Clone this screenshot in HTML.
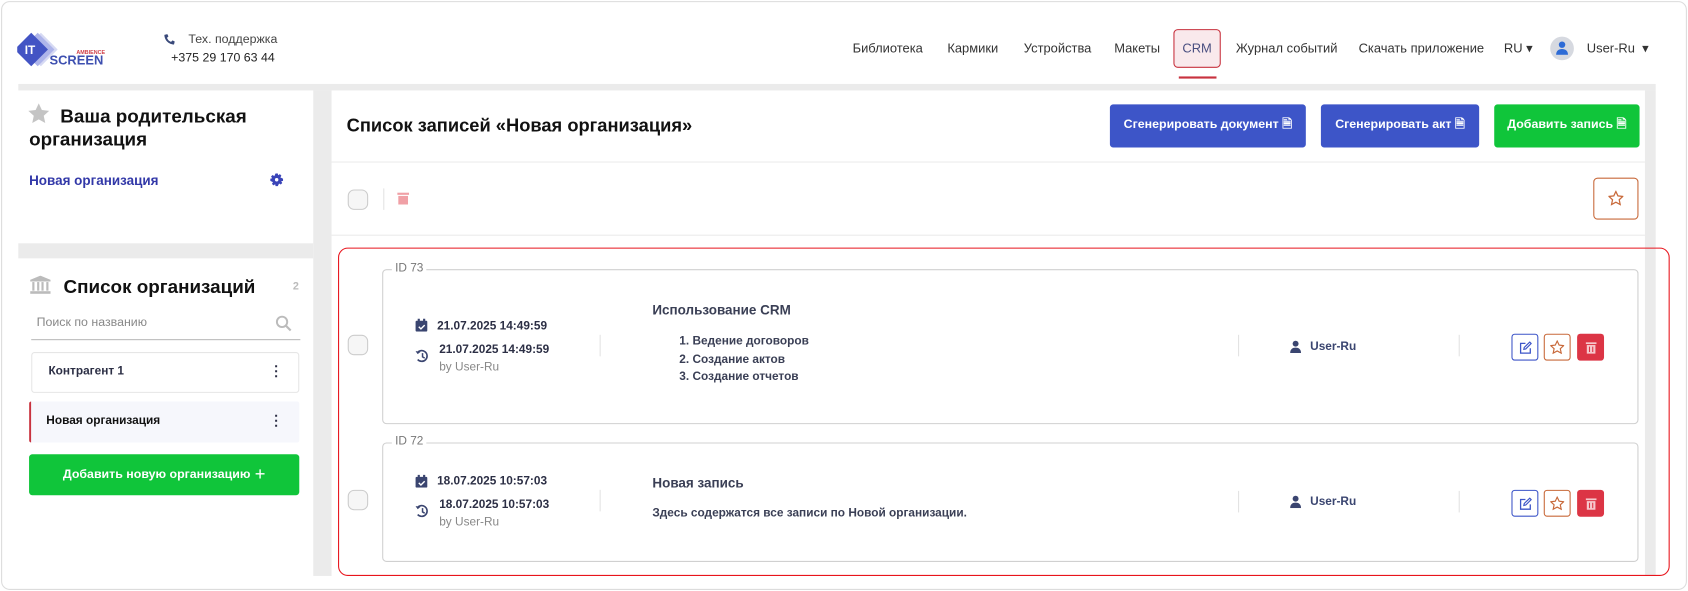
<!DOCTYPE html>
<html><head><meta charset="utf-8"><style>
*{box-sizing:border-box;margin:0;padding:0}
body{width:1688px;height:591px;background:#fff;font-family:"Liberation Sans",sans-serif;color:#2c2f45;position:relative;overflow:hidden}
#w{position:absolute;left:0;top:0;width:1568px;height:549px;transform:scale(1.07653);transform-origin:0 0}
.abs{position:absolute}
.frame{left:1px;top:1px;width:1566px;height:547px;border:1px solid #dcdcdc;border-radius:8px}
.nav a{position:absolute;top:38px;font-size:12px;color:#333}
.gray{background:#ebebeb}
.b{font-weight:bold}
.btn{position:absolute;top:97px;height:40px;border-radius:3px;color:#fff;font-size:11.5px;font-weight:bold;display:flex;align-items:center;justify-content:center}
.card{position:absolute;left:355px;width:1167px;border:1px solid #d0d0d0;border-radius:4px}
.legend{position:absolute;top:-8px;left:8px;background:#fff;padding:0 3px;font-size:11px;color:#777}
.chk{position:absolute;width:19px;height:19px;border:1px solid #ccc;border-radius:6px;background:#f6f6f6}
.vl{position:absolute;width:1px;background:#e3e3e3;height:20px}
.sq{position:absolute;width:25px;height:25px;border-radius:3px;display:flex;align-items:center;justify-content:center}
</style></head><body><div id="w">
<div class="abs frame"></div>
<!-- logo -->
<svg class="abs" style="left:16px;top:30px" width="90" height="36" viewBox="0 0 90 36">
<rect x="11" y="5" width="22" height="22" transform="rotate(45 22 16)" fill="#d6d9f3"/>
<rect x="8" y="5" width="22" height="22" transform="rotate(45 19 16)" fill="#aeb5ea"/>
<rect x="2" y="5" width="22" height="22" transform="rotate(45 13 16)" fill="#4354c4"/>
<text x="7" y="20" font-size="11" font-weight="bold" fill="#fff" font-family="Liberation Sans">IT</text>
<text x="55" y="20" font-size="5" font-weight="bold" fill="#d0404a" font-family="Liberation Sans">AMBIENCE</text>
<text x="30" y="30" font-size="12" font-weight="bold" fill="#3d4fb0" font-family="Liberation Sans">SCREEN</text>
</svg>
<svg class="abs" style="left:152px;top:31px" width="11" height="11" viewBox="0 0 16 16"><path d="M15 11l-3-1.5-2 2C7 10 6 9 4.5 6l2-2L5 1 1 2c0 7 6 13 13 13z" fill="#3a4a7a"/></svg>
<div class="abs" style="left:175px;top:31px;font-size:11.5px;color:#444">Тех. поддержка</div>
<div class="abs" style="left:159px;top:48px;font-size:11.5px;color:#222">+375 29 170 63 44</div>
<div class="nav">
<a style="left:792px">Библиотека</a><a style="left:880px">Кармики</a><a style="left:951px">Устройства</a><a style="left:1035px">Макеты</a>
<a style="left:1148px">Журнал событий</a><a style="left:1262px">Скачать приложение</a><a style="left:1397px">RU ▾</a>
<a style="left:1474px">User-Ru &nbsp;▾</a>
</div>
<div class="abs" style="left:1090px;top:27px;width:44px;height:36px;border:1.5px solid #c8323e;border-radius:4px;background:#f9e9ec;font-size:12px;color:#4a4f80;text-align:center;line-height:34px">CRM</div>
<div class="abs" style="left:1095px;top:71px;width:35px;height:1.5px;background:#c8323e"></div>
<div class="abs" style="left:1440px;top:34px;width:22px;height:22px;border-radius:50%;background:#d6d9e0"></div>
<svg class="abs" style="left:1445px;top:38px" width="12" height="13" viewBox="0 0 12 13"><circle cx="6" cy="3.5" r="3" fill="#2d6bd6"/><path d="M0.5 13c0-4 2.5-5.5 5.5-5.5s5.5 1.5 5.5 5.5z" fill="#2d6bd6"/></svg>
<!-- gray backgrounds -->
<div class="abs gray" style="left:17px;top:78px;width:1521px;height:6px"></div>
<div class="abs gray" style="left:291px;top:84px;width:17px;height:451px"></div>
<div class="abs gray" style="left:17px;top:226px;width:274px;height:14px"></div>
<div class="abs gray" style="left:1528px;top:84px;width:10px;height:451px"></div>
<!-- left panel 1 -->
<svg class="abs" style="left:26px;top:96px" width="20" height="19" viewBox="0 0 24 23"><path d="M12 0l3.5 7.5 8.2.9-6.1 5.6 1.7 8.1L12 18l-7.3 4.1 1.7-8.1L.3 8.4l8.2-.9z" fill="#c4c4c4"/></svg>
<div class="abs b" style="left:27px;top:98px;font-size:17.5px;line-height:21px;color:#111;text-indent:29px;width:260px">Ваша родительская организация</div>
<div class="abs b" style="left:27px;top:161px;font-size:12.5px;color:#3238a8">Новая организация</div>
<svg class="abs" style="left:251px;top:161px" width="12" height="12" viewBox="0 0 12 12"><path d="M5 0h2l.4 1.8 1.6-1 1.4 1.4-1 1.6L12 5v2l-1.8.4 1 1.6-1.4 1.4-1.6-1L7 12H5l-.4-1.8-1.6 1-1.4-1.4 1-1.6L0 7V5l1.8-.4-1-1.6 1.4-1.4 1.6 1z" fill="#3a44b8"/><circle cx="6" cy="6" r="1.6" fill="#fff"/></svg>
<!-- left panel 2 -->
<svg class="abs" style="left:28px;top:256px" width="19" height="17" viewBox="0 0 19 17"><path d="M9.5 0L19 4v1.5H0V4z" fill="#bbb"/><rect x="2" y="6" width="2" height="8" fill="#bbb"/><rect x="6.5" y="6" width="2" height="8" fill="#bbb"/><rect x="10.5" y="6" width="2" height="8" fill="#bbb"/><rect x="15" y="6" width="2" height="8" fill="#bbb"/><rect x="0" y="14.5" width="19" height="2.5" fill="#bbb"/></svg>
<div class="abs b" style="left:59px;top:256px;font-size:17.5px;color:#111">Список организаций</div>
<div class="abs b" style="left:272px;top:261px;font-size:10px;color:#bbb">2</div>
<div class="abs" style="left:34px;top:294px;font-size:11.5px;color:#888">Поиск по названию</div>
<svg class="abs" style="left:256px;top:293px" width="15" height="15" viewBox="0 0 15 15"><circle cx="6" cy="6" r="4.8" fill="none" stroke="#bbb" stroke-width="1.8"/><path d="M9.5 9.5L14 14" stroke="#bbb" stroke-width="2"/></svg>
<div class="abs" style="left:29px;top:315px;width:250px;height:1px;background:#bbb"></div>
<div class="abs" style="left:29px;top:327px;width:249px;height:38px;border:1px solid #e6e6e6;border-radius:3px"></div>
<div class="abs b" style="left:45px;top:339px;font-size:11px;color:#2c2f45">Контрагент 1</div>
<div class="abs b" style="left:250px;top:337px;font-size:13px">⋮</div>
<div class="abs" style="left:27px;top:373px;width:251px;height:38px;background:#f6f7fc;border-left:2px solid #c8323e;border-radius:2px"></div>
<div class="abs b" style="left:43px;top:385px;font-size:11px;color:#111">Новая организация</div>
<div class="abs b" style="left:250px;top:383px;font-size:13px">⋮</div>
<div class="abs b" style="left:27px;top:422px;width:251px;height:38px;background:#10c53a;border-radius:3px;color:#fff;font-size:11.5px;display:flex;align-items:center;justify-content:center">Добавить новую организацию <span style="font-size:17px;font-weight:normal;margin-left:4px">+</span></div>
<!-- main header -->
<div class="abs b" style="left:322px;top:107px;font-size:17px;color:#111">Список записей «Новая организация»</div>
<div class="btn" style="left:1031px;width:182px;background:#3d55c8">Сгенерировать документ&nbsp;🗎</div>
<div class="btn" style="left:1227px;width:147px;background:#3d55c8">Сгенерировать акт&nbsp;🗎</div>
<div class="btn" style="left:1388px;width:135px;background:#10c53a">Добавить запись&nbsp;🗎</div>
<div class="abs" style="left:308px;top:150px;width:1220px;height:1px;background:#ebebeb"></div>
<div class="chk" style="left:323px;top:176px"></div>
<div class="vl" style="left:356px;top:175px"></div>
<svg class="abs" style="left:369px;top:178px" width="11" height="12" viewBox="0 0 11 12"><rect x="0" y="1" width="11" height="2" fill="#f0a0a6"/><rect x="1" y="4" width="9" height="8" fill="#f0a0a6"/></svg>
<div class="abs" style="left:1480px;top:165px;width:42px;height:39px;border:1px solid #c8693a;border-radius:4px"></div>
<svg class="abs" style="left:1494px;top:177px" width="14" height="14" viewBox="0 0 24 23"><path d="M12 1l3.3 7 7.7.9-5.7 5.3 1.6 7.6L12 18l-6.9 3.8 1.6-7.6L1 8.9l7.7-.9z" fill="none" stroke="#c8693a" stroke-width="2"/></svg>
<div class="abs" style="left:308px;top:218px;width:1220px;height:1px;background:#ebebeb"></div>
<div class="abs" style="left:314px;top:230px;width:1237px;height:305px;border:1px solid #e8141c;border-radius:9px"></div>

<!-- card 1 -->
<div class="card" style="top:250px;height:144px"><div class="legend">ID 73</div></div>
<div class="chk" style="left:323px;top:311px"></div>
<svg class="abs" style="left:386px;top:296px" width="11" height="12" viewBox="0 0 11 12"><rect x="0" y="2" width="11" height="10" rx="1" fill="#3a4570"/><rect x="2" y="0" width="2" height="3" fill="#3a4570"/><rect x="7" y="0" width="2" height="3" fill="#3a4570"/><path d="M3 7.5l2 2 3.5-3.5" stroke="#fff" stroke-width="1.3" fill="none"/></svg>
<div class="abs b" style="left:406px;top:297px;font-size:11px">21.07.2025 14:49:59</div>
<svg class="abs" style="left:386px;top:324px" width="12" height="13" viewBox="0 0 12 13"><path d="M1.5 4A5 5 0 1 1 2 10" fill="none" stroke="#3a4570" stroke-width="1.5"/><path d="M0 2l2 3 2.5-2z" fill="#3a4570"/><path d="M6.5 4v3.5l2 1.2" stroke="#3a4570" stroke-width="1.4" fill="none"/></svg>
<div class="abs b" style="left:408px;top:319px;font-size:11px">21.07.2025 14:49:59</div>
<div class="abs" style="left:408px;top:335px;font-size:11px;color:#888">by User-Ru</div>
<div class="vl" style="left:557px;top:311px"></div>
<div class="abs b" style="left:606px;top:281px;font-size:12.5px;color:#3a3f55">Использование CRM</div>
<div class="abs b" style="left:631px;top:309px;font-size:11px;line-height:16.5px;color:#3a3f55">1. Ведение договоров<br>2. Создание актов<br>3. Создание отчетов</div>
<div class="vl" style="left:1150px;top:311px"></div>
<svg class="abs" style="left:1198px;top:316px" width="11" height="12" viewBox="0 0 12 13"><circle cx="6" cy="3.5" r="3" fill="#3a4570"/><path d="M0.5 13c0-4 2.5-5.5 5.5-5.5s5.5 1.5 5.5 5.5z" fill="#3a4570"/></svg>
<div class="abs b" style="left:1217px;top:316px;font-size:11px;color:#3a4570">User-Ru</div>
<div class="vl" style="left:1355px;top:311px"></div>
<div class="sq" style="left:1404px;top:310px;border:1px solid #3d55c8"><svg width="12" height="12" viewBox="0 0 12 12"><path d="M6 2H1.5v9h9V6.5" fill="none" stroke="#3d55c8" stroke-width="1.2"/><path d="M4.5 7.5l.4-1.8L10 .8l1.3 1.3-5 5z" fill="none" stroke="#3d55c8" stroke-width="1.1"/></svg></div>
<div class="sq" style="left:1434px;top:310px;border:1px solid #c8693a"><svg width="13" height="13" viewBox="0 0 24 23"><path d="M12 1l3.3 7 7.7.9-5.7 5.3 1.6 7.6L12 18l-6.9 3.8 1.6-7.6L1 8.9l7.7-.9z" fill="none" stroke="#c8693a" stroke-width="2"/></svg></div>
<div class="sq" style="left:1465px;top:310px;background:#dc3545"><svg width="10" height="12" viewBox="0 0 10 12"><rect x="0" y="1" width="10" height="1.6" fill="#f6c8cc"/><rect x="1" y="3.5" width="8" height="8" fill="#f6c8cc"/><path d="M3.5 5v5M6.5 5v5" stroke="#dc3545"/></svg></div>

<!-- card 2 -->
<div class="card" style="top:411px;height:111px"><div class="legend">ID 72</div></div>
<div class="chk" style="left:323px;top:455px"></div>
<svg class="abs" style="left:386px;top:441px" width="11" height="12" viewBox="0 0 11 12"><rect x="0" y="2" width="11" height="10" rx="1" fill="#3a4570"/><rect x="2" y="0" width="2" height="3" fill="#3a4570"/><rect x="7" y="0" width="2" height="3" fill="#3a4570"/><path d="M3 7.5l2 2 3.5-3.5" stroke="#fff" stroke-width="1.3" fill="none"/></svg>
<div class="abs b" style="left:406px;top:441px;font-size:11px">18.07.2025 10:57:03</div>
<svg class="abs" style="left:386px;top:468px" width="12" height="13" viewBox="0 0 12 13"><path d="M1.5 4A5 5 0 1 1 2 10" fill="none" stroke="#3a4570" stroke-width="1.5"/><path d="M0 2l2 3 2.5-2z" fill="#3a4570"/><path d="M6.5 4v3.5l2 1.2" stroke="#3a4570" stroke-width="1.4" fill="none"/></svg>
<div class="abs b" style="left:408px;top:463px;font-size:11px">18.07.2025 10:57:03</div>
<div class="abs" style="left:408px;top:479px;font-size:11px;color:#888">by User-Ru</div>
<div class="vl" style="left:557px;top:455px"></div>
<div class="abs b" style="left:606px;top:442px;font-size:12.5px;color:#3a3f55">Новая запись</div>
<div class="abs b" style="left:606px;top:471px;font-size:11px;color:#3a3f55">Здесь содержатся все записи по Новой организации.</div>
<div class="vl" style="left:1150px;top:456px"></div>
<svg class="abs" style="left:1198px;top:460px" width="11" height="12" viewBox="0 0 12 13"><circle cx="6" cy="3.5" r="3" fill="#3a4570"/><path d="M0.5 13c0-4 2.5-5.5 5.5-5.5s5.5 1.5 5.5 5.5z" fill="#3a4570"/></svg>
<div class="abs b" style="left:1217px;top:460px;font-size:11px;color:#3a4570">User-Ru</div>
<div class="vl" style="left:1355px;top:456px"></div>
<div class="sq" style="left:1404px;top:455px;border:1px solid #3d55c8"><svg width="12" height="12" viewBox="0 0 12 12"><path d="M6 2H1.5v9h9V6.5" fill="none" stroke="#3d55c8" stroke-width="1.2"/><path d="M4.5 7.5l.4-1.8L10 .8l1.3 1.3-5 5z" fill="none" stroke="#3d55c8" stroke-width="1.1"/></svg></div>
<div class="sq" style="left:1434px;top:455px;border:1px solid #c8693a"><svg width="13" height="13" viewBox="0 0 24 23"><path d="M12 1l3.3 7 7.7.9-5.7 5.3 1.6 7.6L12 18l-6.9 3.8 1.6-7.6L1 8.9l7.7-.9z" fill="none" stroke="#c8693a" stroke-width="2"/></svg></div>
<div class="sq" style="left:1465px;top:455px;background:#dc3545"><svg width="10" height="12" viewBox="0 0 10 12"><rect x="0" y="1" width="10" height="1.6" fill="#f6c8cc"/><rect x="1" y="3.5" width="8" height="8" fill="#f6c8cc"/><path d="M3.5 5v5M6.5 5v5" stroke="#dc3545"/></svg></div>
</div></body></html>
